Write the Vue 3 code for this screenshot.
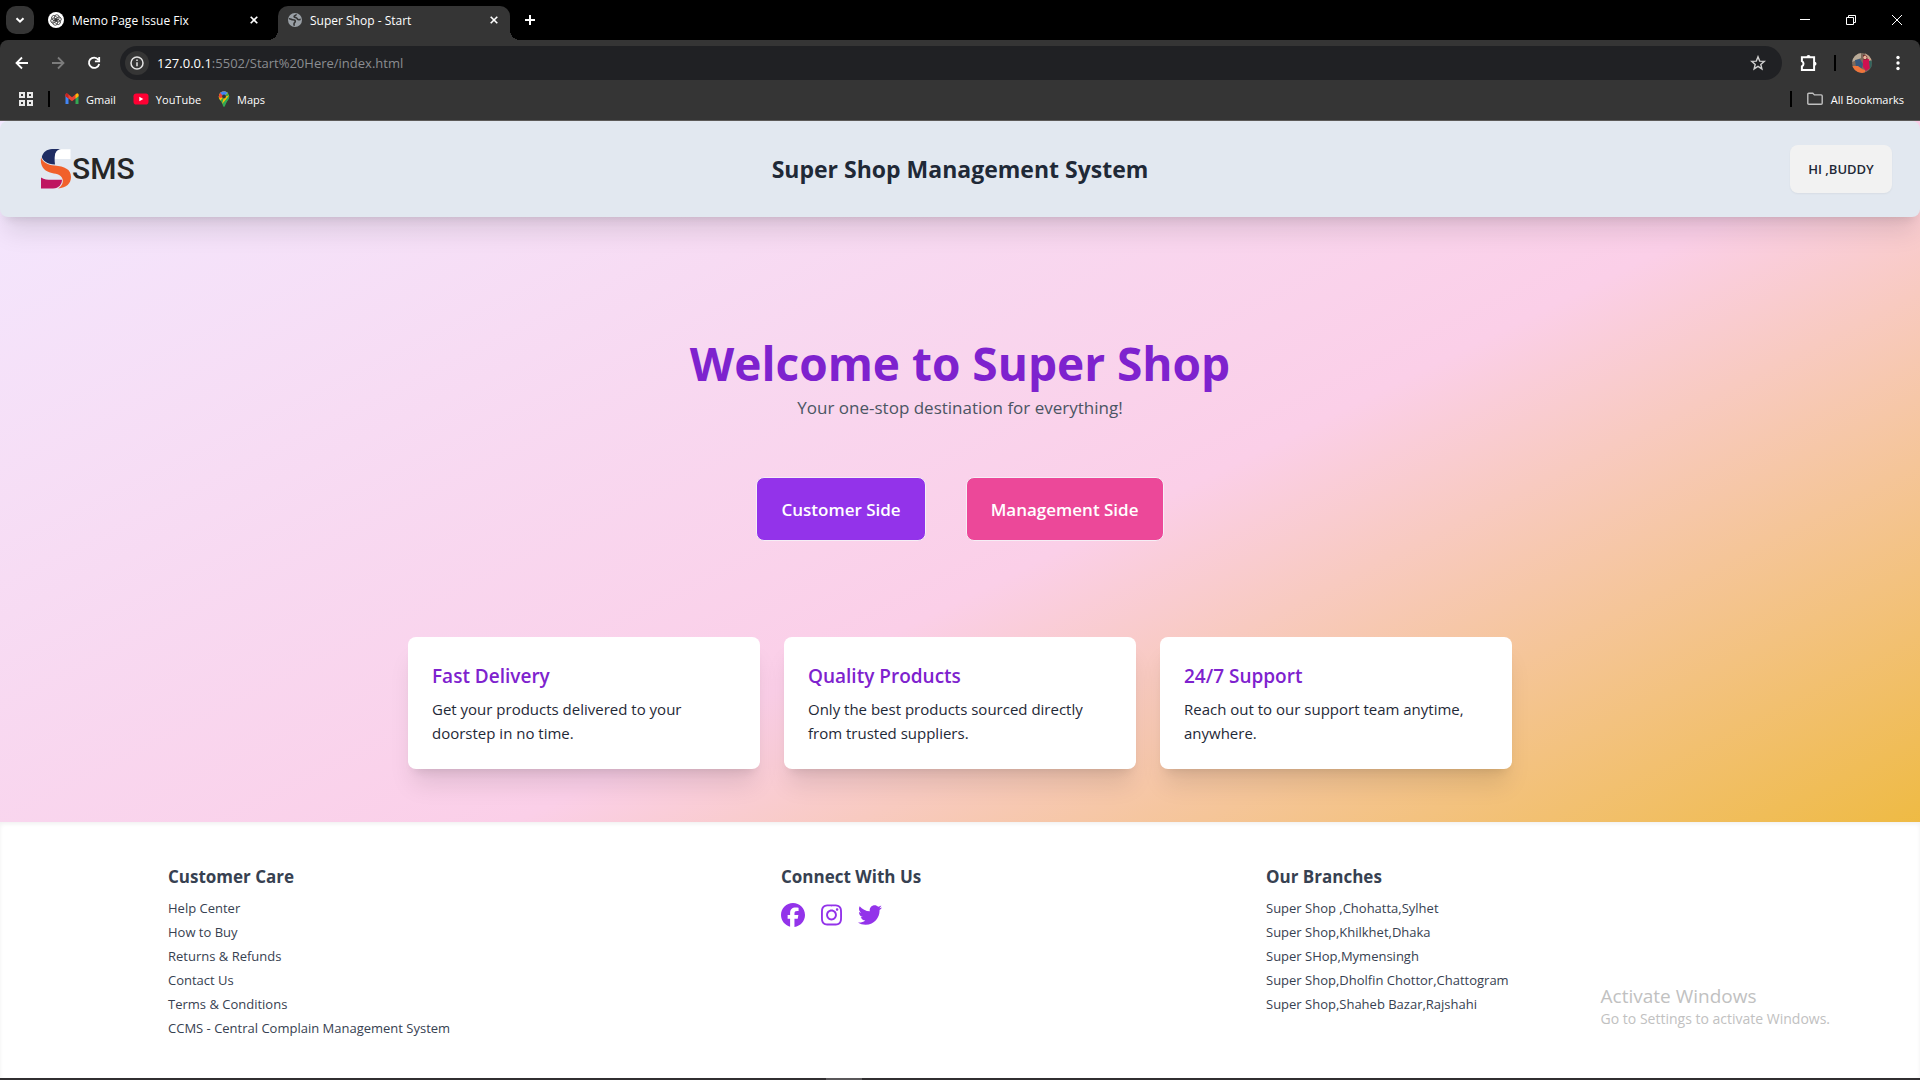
<script setup>
const bookmarks = [
  { name: 'Gmail', icon: 'gmail' },
  { name: 'YouTube', icon: 'youtube' },
  { name: 'Maps', icon: 'maps' },
]

const features = [
  { title: 'Fast Delivery', text: 'Get your products delivered to your doorstep in no time.' },
  { title: 'Quality Products', text: 'Only the best products sourced directly from trusted suppliers.' },
  { title: '24/7 Support', text: 'Reach out to our support team anytime, anywhere.' },
]

const careLinks = [
  'Help Center',
  'How to Buy',
  'Returns & Refunds',
  'Contact Us',
  'Terms & Conditions',
  'CCMS - Central Complain Management System',
]

const branches = [
  'Super Shop ,Chohatta,Sylhet',
  'Super Shop,Khilkhet,Dhaka',
  'Super SHop,Mymensingh',
  'Super Shop,Dholfin Chottor,Chattogram',
  'Super Shop,Shaheb Bazar,Rajshahi',
]

const socials = [
  {
    name: 'Facebook',
    box: '0 0 512 512',
    width: 24,
    path: 'M512 256C512 114.6 397.4 0 256 0S0 114.6 0 256C0 376 82.7 476.8 194.2 504.5V334.2H141.4V256h52.8V222.3c0-87.1 39.4-127.5 125-127.5c16.2 0 44.2 3.2 55.7 6.4V172c-6-.6-16.5-1-29.6-1c-42 0-58.2 15.9-58.2 57.2V256h83.6l-14.4 78.2H287V510.1C413.8 494.8 512 386.9 512 256h0z',
  },
  {
    name: 'Instagram',
    box: '0 0 448 512',
    width: 21,
    path: 'M224.1 141c-63.6 0-114.9 51.3-114.9 114.9s51.3 114.9 114.9 114.9S339 319.5 339 255.9 287.7 141 224.1 141zm0 189.6c-41.1 0-74.7-33.5-74.7-74.7s33.5-74.7 74.7-74.7 74.7 33.5 74.7 74.7-33.6 74.7-74.7 74.7zm146.4-194.3c0 14.9-12 26.8-26.8 26.8-14.9 0-26.8-12-26.8-26.8s12-26.8 26.8-26.8 26.8 12 26.8 26.8zm76.1 27.2c-1.7-35.9-9.9-67.7-36.2-93.9-26.2-26.2-58-34.4-93.9-36.2-37-2.1-147.9-2.1-184.9 0-35.8 1.7-67.6 9.9-93.9 36.1s-34.4 58-36.2 93.9c-2.1 37-2.1 147.9 0 184.9 1.7 35.9 9.9 67.7 36.2 93.9s58 34.4 93.9 36.2c37 2.1 147.9 2.1 184.9 0 35.9-1.7 67.7-9.9 93.9-36.2 26.2-26.2 34.4-58 36.2-93.9 2.1-37 2.1-147.8 0-184.8zM398.8 388c-7.8 19.6-22.9 34.7-42.6 42.6-29.5 11.7-99.5 9-132.1 9s-102.7 2.6-132.1-9c-19.6-7.8-34.7-22.9-42.6-42.6-11.7-29.5-9-99.5-9-132.1s-2.6-102.7 9-132.1c7.8-19.6 22.9-34.7 42.6-42.6 29.5-11.7 99.5-9 132.1-9s102.7-2.6 132.1 9c19.6 7.8 34.7 22.9 42.6 42.6 11.7 29.5 9 99.5 9 132.1s2.7 102.7-9 132.1z',
  },
  {
    name: 'Twitter',
    box: '0 0 512 512',
    width: 24,
    path: 'M459.37 151.716c.325 4.548.325 9.097.325 13.645 0 138.72-105.583 298.558-298.558 298.558-59.452 0-114.68-17.219-161.137-47.106 8.447.974 16.568 1.299 25.34 1.299 49.055 0 94.213-16.568 130.274-44.832-46.132-.975-84.792-31.188-98.112-72.772 6.498.974 12.995 1.624 19.818 1.624 9.421 0 18.843-1.3 27.614-3.573-48.081-9.747-84.143-51.98-84.143-102.985v-1.299c13.969 7.797 30.214 12.67 47.431 13.319-28.264-18.843-46.781-51.005-46.781-87.391 0-19.492 5.197-37.36 14.294-52.954 51.655 63.675 129.3 105.258 216.365 109.807-1.624-7.797-2.599-15.918-2.599-24.04 0-57.828 46.782-104.934 104.934-104.934 30.213 0 57.502 12.67 76.67 33.137 23.715-4.548 46.456-13.32 66.599-25.34-7.798 24.366-24.366 44.833-46.132 57.827 21.117-2.273 41.584-8.122 60.426-16.243-14.292 20.791-32.161 39.308-52.628 54.253z',
  },
]
</script>

<template>
  <div class="window">
    <div class="tab-strip">
      <button class="tab-search" type="button" aria-label="Search tabs">
        <svg width="10" height="10" viewBox="0 0 10 10"><path d="M1.5 3.2 5 6.700l3.500-3.500" /></svg>
      </button>
      <div class="tab">
        <svg width="16" height="16" viewBox="0 0 16 16">
          <circle cx="8" cy="8" r="8" fill="#fff" />
          <g fill="none" stroke="#333" stroke-width="0.8">
            <ellipse v-for="n in 6" :key="n" cx="8.800" cy="5.600" rx="2.400" ry="2.900" :transform="`rotate(${n * 60} 8 8)`" />
          </g>
        </svg>
        <span class="tab-title">Memo Page Issue Fix</span>
        <button class="tab-close" type="button" aria-label="Close tab">
          <svg width="8" height="8" viewBox="0 0 8 8"><path d="M.7.7l6.600 6.600M7.300.7.7 7.300" /></svg>
        </button>
      </div>
      <div class="tab active">
        <svg width="14" height="14" viewBox="0 0 14 14">
          <circle cx="7" cy="7" r="7" fill="#9aa0a6" />
          <path d="M1 5.800c1.800-.2 2.300 1 3.700 1 1.500 0 2.600.1 2.600 1.500 0 1.200-1.300 1.300-1.300 2.400 0 .8.200 1.200 0 2M8.300 1.300c0 1.300-2.200.9-2.200 2.200s1.700.8 2.500 1.500c.8.800 1 1.800 2.200 1.800.8 0 1.200-.4 1.900-.4" fill="none" stroke="#353535" stroke-width="1.600" />
        </svg>
        <span class="tab-title">Super Shop - Start</span>
        <button class="tab-close" type="button" aria-label="Close tab">
          <svg width="8" height="8" viewBox="0 0 8 8"><path d="M.7.7l6.600 6.600M7.300.7.7 7.300" /></svg>
        </button>
      </div>
      <button class="new-tab" type="button" aria-label="New tab">
        <svg width="10" height="10" viewBox="0 0 10 10"><path d="M5 0v10M0 5h10" /></svg>
      </button>
      <div class="window-controls">
        <button type="button" aria-label="Minimize">
          <svg width="10" height="10" viewBox="0 0 10 10"><path d="M0 4.500h10" /></svg>
        </button>
        <button type="button" aria-label="Restore">
          <svg width="10" height="10" viewBox="0 0 10 10"><path d="M.5 2.500h7v7h-7zM2.500 2.500v-2h7v7h-2" /></svg>
        </button>
        <button type="button" aria-label="Close">
          <svg width="10" height="10" viewBox="0 0 10 10"><path d="M0 0l10 10M10 0 0 10" /></svg>
        </button>
      </div>
    </div>

    <div class="chrome">
      <div class="toolbar">
        <button class="tool" type="button" aria-label="Back">
          <svg width="16" height="16" viewBox="0 0 16 16"><path d="M14 8H3M8 2.500 2.500 8 8 13.500" /></svg>
        </button>
        <button class="tool dim" type="button" aria-label="Forward">
          <svg width="16" height="16" viewBox="0 0 16 16"><path d="M2 8h11M8 2.500 13.500 8 8 13.500" /></svg>
        </button>
        <button class="tool" type="button" aria-label="Reload">
          <svg width="16" height="16" viewBox="0 0 16 16"><path d="M12.300 4.600A5.200 5.200 0 1 0 13.200 9M13.200 2v4.300H8.900" /></svg>
        </button>
        <div class="address">
          <button class="site-info" type="button" aria-label="View site information">
            <svg width="14" height="14" viewBox="0 0 14 14">
              <circle cx="7" cy="7" r="6" />
              <path d="M7 6.200v4M7 3.600v1.400" />
            </svg>
          </button>
          <span class="url"><b>127.0.0.1</b>:5502/Start%20Here/index.html</span>
          <button class="star" type="button" aria-label="Bookmark this tab">
            <svg width="16" height="16" viewBox="0 0 16 16"><path d="M8 1.800l1.700 4.300 4.600.3-3.500 3 1.100 4.500L8 11.400l-3.900 2.500 1.100-4.500-3.500-3 4.600-.3z" /></svg>
          </button>
        </div>
        <button class="extensions" type="button" aria-label="Extensions">
          <svg width="18" height="18" viewBox="0 0 18 18">
            <path d="M1.900 3.300h12.200v12.600H1.900v-3.600a2.900 2.900 0 0 0 0-5.200z" />
            <path d="M6.500 3a2 2 0 0 1 4 0zM14.500 7.700a2 2 0 0 1 0 4z" fill="#fff" stroke="none" />
          </svg>
        </button>
        <span class="divider"></span>
        <svg class="avatar" width="20" height="20" viewBox="0 0 20 20" role="img" aria-label="Profile">
          <clipPath id="face"><circle cx="10" cy="10" r="10" /></clipPath>
          <g clip-path="url(#face)">
            <path d="M0 0h20v20H0z" fill="#7d6a5c" />
            <path d="M0 0h9v5L0 9z" fill="#b9ab98" />
            <path d="M13 0h7v8h-5z" fill="#c7a58d" />
            <path d="M11 2l4 1 1 5-4 1z" fill="#6e1d22" />
            <circle cx="13" cy="4.500" r="1.700" fill="#eab59b" />
            <path d="M3 7l5-1 3 5-1 4-6-1z" fill="#38587c" />
            <path d="M11 7l6-1 1 9-4 3-3-4z" fill="#cf1150" />
            <path d="M17 8l3-1v8l-2 1z" fill="#34655e" />
            <path d="M0 13l6 0 4 3 3 1v3H3z" fill="#f0753b" />
          </g>
        </svg>
        <button class="menu" type="button" aria-label="Chrome menu">
          <svg width="4" height="16" viewBox="0 0 4 16"><circle cx="2" cy="2.500" r="1.700" /><circle cx="2" cy="8" r="1.700" /><circle cx="2" cy="13.500" r="1.700" /></svg>
        </button>
      </div>

      <nav class="bookmarks" aria-label="Bookmarks">
        <svg width="14" height="14" viewBox="0 0 14 14" fill="none" stroke="#e8e8e8" stroke-width="2">
          <path d="M1 1h4v4H1zM9 1h4v4H9zM1 9h4v4H1zM9 9h4v4H9z" />
        </svg>
        <span class="divider"></span>
        <a v-for="mark in bookmarks" :key="mark.name" href="#">
          <svg v-if="mark.icon === 'gmail'" width="14" height="16" viewBox="0 0 14 16">
            <path d="M.5 4v9h3V6.500z" fill="#4285f4" />
            <path d="M13.500 4v9h-3V6.500z" fill="#34a853" />
            <path d="M.5 3.500c0-1 1.300-1.400 2-.8L7 6.300l4.500-3.600c.7-.6 2-.2 2 .8v1.700L7 10.200.5 5.200z" fill="#ea4335" />
            <path d="M10.500 3.500v4l3-2.300V3.500c0-1-1.300-1.400-2-.8z" fill="#fbbc04" />
            <path d="M.5 3.500v1.700l3 2.300v-4l-1-.8c-.7-.6-2-.2-2 .8z" fill="#c5221f" />
          </svg>
          <svg v-else-if="mark.icon === 'youtube'" width="16" height="16" viewBox="0 0 16 16">
            <rect x=".5" y="2.500" width="15" height="11" rx="2.800" fill="#ff0033" />
            <path d="M6.300 5.700v4.600L10.300 8z" fill="#fff" />
          </svg>
          <svg v-else width="12" height="16" viewBox="0 0 12 16">
            <clipPath id="pin"><path d="M6 .3a5.200 5.200 0 0 1 5.200 5.200c0 3.500-3.200 4.800-4.200 9.300-.3 1.100-1.700 1.100-2 0C4 10.300.8 9 .8 5.500A5.200 5.200 0 0 1 6 .3z" /></clipPath>
            <g clip-path="url(#pin)">
              <path d="M0 0h12v16H0z" fill="#34a853" />
              <path d="M0 0h12L6 5.500 2 10H0z" fill="#fbbc04" />
              <path d="M0 0h6v5L3 7 0 6z" fill="#ea4335" />
              <path d="M1 1l3-2h8L6 5.500z" fill="#4285f4" />
              <path d="M12 4L4 13l2-7z" fill="#fbbc04" />
              <path d="M12 3v13H4l1-3z" fill="#34a853" />
            </g>
            <circle cx="6" cy="5.500" r="1.900" fill="#353535" />
          </svg>
          <span>{{ mark.name }}</span>
        </a>
        <span class="divider push"></span>
        <button class="all-bookmarks" type="button">
          <svg width="16" height="14" viewBox="0 0 16 14"><path d="M.8 2.300c0-.6.4-1 1-1h4l1.600 1.600h6.800c.6 0 1 .4 1 1v7.300c0 .6-.4 1-1 1H1.800c-.6 0-1-.4-1-1z" /></svg>
          <span>All Bookmarks</span>
        </button>
      </nav>
    </div>

    <div class="page">
      <header class="navbar">
        <a class="logo" href="#" aria-label="Home">
          <svg width="32" height="40" viewBox="0 0 32 40">
            <path d="M12 0h9C15 1 14 6 15 15.500 7 15 3 12 1.800 8 3 3 7 .3 12 0z" fill="#1f2d63" />
            <path d="M21 .3h9.500V10H15C14.500 5 16 1.500 21 .3z" fill="#fff" />
            <path d="M1 8.500c2 5 6.500 7.300 13.500 8 10 1 16.500 3.500 16.500 11.500 0 6.500-4.500 11-13 11.400 4-2.400 5.500-5.900 4.500-9.400-1.500-5.500-7.500-5-12.500-6.500C3.500 21.500 0 16.500 1 8.500z" fill="#f1602a" />
            <path d="M1 28.500c3 2.300 7 2.300 10 2.300h11c0 4.200-3 8.700-9 8.700H1z" fill="#bf1560" />
          </svg>
          <span>SMS</span>
        </a>
        <h1>Super Shop Management System</h1>
        <div class="navbar-end">
          <button class="greeting" type="button">HI ,BUDDY</button>
        </div>
      </header>

      <main class="hero">
        <h2>Welcome to Super Shop</h2>
        <p class="tagline">Your one-stop destination for everything!</p>
        <div class="actions">
          <button class="customer" type="button">Customer Side</button>
          <button class="management" type="button">Management Side</button>
        </div>
        <section class="features">
          <article v-for="feature in features" :key="feature.title">
            <h3>{{ feature.title }}</h3>
            <p>{{ feature.text }}</p>
          </article>
        </section>
      </main>

      <footer>
        <section>
          <h4>Customer Care</h4>
          <ul>
            <li v-for="link in careLinks" :key="link"><a href="#">{{ link }}</a></li>
          </ul>
        </section>
        <section>
          <h4>Connect With Us</h4>
          <div class="socials">
            <a v-for="s in socials" :key="s.name" href="#" :aria-label="s.name">
              <svg :width="s.width" height="24" :viewBox="s.box"><path :d="s.path" /></svg>
            </a>
          </div>
        </section>
        <section>
          <h4>Our Branches</h4>
          <ul>
            <li v-for="branch in branches" :key="branch">{{ branch }}</li>
          </ul>
        </section>
      </footer>
    </div>

    <div class="taskbar"><span></span></div>

    <aside class="watermark">
      <strong>Activate Windows</strong>
      <span>Go to Settings to activate Windows.</span>
    </aside>
  </div>
</template>

<style>
body {
  margin: 0;
  background: #353535;
}
</style>

<style scoped>
* {
  box-sizing: border-box;
}

.window {
  position: relative;
  display: flex;
  flex-direction: column;
  min-height: 100vh;
  font-family: 'Segoe UI', 'Open Sans', 'Noto Sans', sans-serif;
  color: #1f2937;
}

h1, h2, h3, h4, p, ul {
  margin: 0;
  padding: 0;
}

ul {
  list-style: none;
}

a {
  color: inherit;
  text-decoration: none;
}

button {
  display: flex;
  align-items: center;
  justify-content: center;
  margin: 0;
  padding: 0;
  border: 0;
  background: none;
  color: inherit;
  font-family: inherit;
}

svg {
  display: block;
  flex: none;
}

/* Browser frame */
.tab-strip {
  display: flex;
  align-items: flex-end;
  height: 40px;
  padding-left: 6px;
  background: #000;
  color: #fff;
  font-size: 12px;
}

.tab-strip button svg {
  fill: none;
  stroke: #fff;
}

.tab-search {
  align-self: center;
  width: 28px;
  height: 28px;
  border-radius: 10px;
  background: #353535;
}

.tab-search svg {
  stroke-width: 2;
}

.tab-close svg {
  stroke-width: 1.6;
}

.tab {
  display: flex;
  align-items: center;
  width: 232px;
  height: 34px;
  margin-left: 4px;
  padding: 0 8px 6px 10px;
}

.tab.active {
  position: relative;
  border-radius: 10px 10px 0 0;
  background: #353535;
}

.tab + .tab {
  margin-left: 8px;
}

.tab.active::before,
.tab.active::after {
  content: '';
  position: absolute;
  bottom: 0;
  width: 10px;
  height: 10px;
}

.tab.active::before {
  left: -10px;
  background: radial-gradient(circle at 0 0, #000 10px, #353535 10px);
}

.tab.active::after {
  right: -10px;
  background: radial-gradient(circle at 100% 0, #000 10px, #353535 10px);
}

.tab-title {
  flex: 1;
  margin-left: 8px;
}

.tab-close {
  width: 16px;
  height: 16px;
}

.new-tab {
  width: 28px;
  height: 28px;
  margin: 0 0 6px 6px;
}

.new-tab svg {
  stroke-width: 2;
}

.window-controls {
  display: flex;
  align-self: stretch;
  margin-left: auto;
}

.window-controls button {
  width: 46px;
}

.chrome {
  border-bottom: 1px solid #5c5a58;
  background: #000;
  color: #fff;
  font-size: 11px;
}

.toolbar {
  display: flex;
  align-items: center;
  height: 46px;
  padding: 0 20px 0 9px;
  border-radius: 8px 8px 0 0;
  background: #353535;
}

.tool {
  width: 26px;
  height: 26px;
  margin-right: 10px;
}

.tool svg {
  fill: none;
  stroke: #fff;
  stroke-width: 1.8;
}

.tool.dim svg {
  stroke: #7c7c7c;
}

.address {
  display: flex;
  flex: 1;
  align-items: center;
  height: 34px;
  margin-left: 3px;
  padding: 0 16px 0 5px;
  border-radius: 17px;
  background: #202124;
  font-size: 13px;
}

.site-info {
  width: 24px;
  height: 24px;
  border-radius: 50%;
  background: #353535;
}

.site-info svg {
  fill: none;
  stroke: #e3e3e3;
  stroke-width: 1.5;
}

.url {
  flex: 1;
  margin-left: 8px;
  color: #8b8d91;
}

.url b {
  color: #fff;
  font-weight: 400;
}

.star svg {
  fill: none;
  stroke: #d0d0d0;
  stroke-width: 1.4;
}

.extensions {
  margin: 0 16px 0 18px;
}

.extensions svg {
  fill: none;
  stroke: #fff;
  stroke-width: 2;
}

.divider {
  width: 2px;
  height: 16px;
  background: #000;
}

.avatar {
  margin: 0 24px 0 16px;
}

.menu svg {
  fill: #fff;
}

.bookmarks {
  display: flex;
  align-items: center;
  height: 34px;
  padding: 0 16px 8px 19px;
  background: #353535;
}

.bookmarks .divider {
  margin: 0 15px;
}

.bookmarks a {
  display: flex;
  align-items: center;
  gap: 7px;
  margin-right: 17px;
}

.bookmarks .push {
  margin-left: auto;
}

.all-bookmarks {
  gap: 8px;
  font-size: 11px;
}

.all-bookmarks svg {
  fill: none;
  stroke: #c0c0c0;
  stroke-width: 1.4;
}

/* Web page */
.page {
  display: flex;
  flex: 1;
  flex-direction: column;
  background: linear-gradient(to bottom right, #f3e8ff, #fbcfe8, #eab308);
}

.navbar {
  display: grid;
  grid-template-columns: 1fr auto 1fr;
  align-items: center;
  height: 96px;
  padding: 0 28px;
  border-radius: 8px;
  background: #e2e8f0;
  box-shadow: 0 20px 25px -5px rgb(0 0 0 / 0.1), 0 8px 10px -6px rgb(0 0 0 / 0.1);
}

.logo {
  display: flex;
  align-items: center;
  margin-left: 12px;
  color: #262626;
  font-family: Roboto, sans-serif;
  font-size: 30px;
  font-weight: 500;
  line-height: 40px;
}

.navbar h1 {
  font-size: 23px;
  line-height: 32px;
}

.navbar-end {
  display: flex;
  justify-content: flex-end;
}

.greeting {
  width: 102px;
  height: 48px;
  border-radius: 8px;
  background: #f2f2f2;
  box-shadow: 0 1px 2px rgb(0 0 0 / 0.05);
  font-size: 13px;
  font-weight: 600;
}

.hero {
  display: flex;
  flex: 1;
  flex-direction: column;
  align-items: center;
  padding: 122px 24px 52px;
}

.hero h2 {
  color: #7e22ce;
  font-size: 46px;
  line-height: 48px;
}

.tagline {
  margin-top: 7px;
  color: #4b5563;
  font-size: 17px;
  line-height: 28px;
}

.actions {
  display: flex;
  gap: 40px;
  margin: 55px 0 96px;
}

.actions button {
  height: 64px;
  padding: 0 24px;
  border: 1px solid #f5eef5;
  border-radius: 8px;
  color: #fff;
  font-size: 17px;
  font-weight: 600;
}

.actions .customer {
  background: #9333ea;
}

.actions .management {
  background: #ec4899;
}

.features {
  display: grid;
  grid-template-columns: repeat(3, 1fr);
  gap: 24px;
  width: 100%;
  max-width: 1104px;
}

.features article {
  padding: 24px;
  border-radius: 8px;
  background: #fff;
  box-shadow: 0 20px 25px -5px rgb(0 0 0 / 0.1), 0 8px 10px -6px rgb(0 0 0 / 0.1);
}

.features h3 {
  padding-top: 1px;
  margin-bottom: 7px;
  color: #7e22ce;
  font-size: 19px;
  font-weight: 600;
  line-height: 28px;
}

.features p {
  font-size: 15px;
  line-height: 24px;
}

footer {
  display: grid;
  grid-template-columns: 613fr 485fr 486fr;
  padding: 41px 168px 38px;
  background: #fff;
  box-shadow: inset 0 2px 4px rgb(0 0 0 / 0.06);
  color: #374151;
  font-size: 13px;
  line-height: 24px;
}

footer h4 {
  margin-bottom: 5px;
  font-size: 17px;
  line-height: 28px;
}

.socials {
  display: flex;
  gap: 16px;
  padding-top: 7px;
  fill: #9333ea;
}

.taskbar {
  display: flex;
  height: 2px;
  padding-left: 43%;
  background: #312f31;
}

.taskbar span {
  width: 36px;
  background: #5a585a;
}

.watermark {
  position: absolute;
  right: 90px;
  bottom: 51px;
  display: flex;
  flex-direction: column;
  color: #c1c1c1;
  font-size: 14px;
  line-height: 20px;
}

.watermark strong {
  font-size: 19px;
  font-weight: 400;
  line-height: 26px;
}
</style>
